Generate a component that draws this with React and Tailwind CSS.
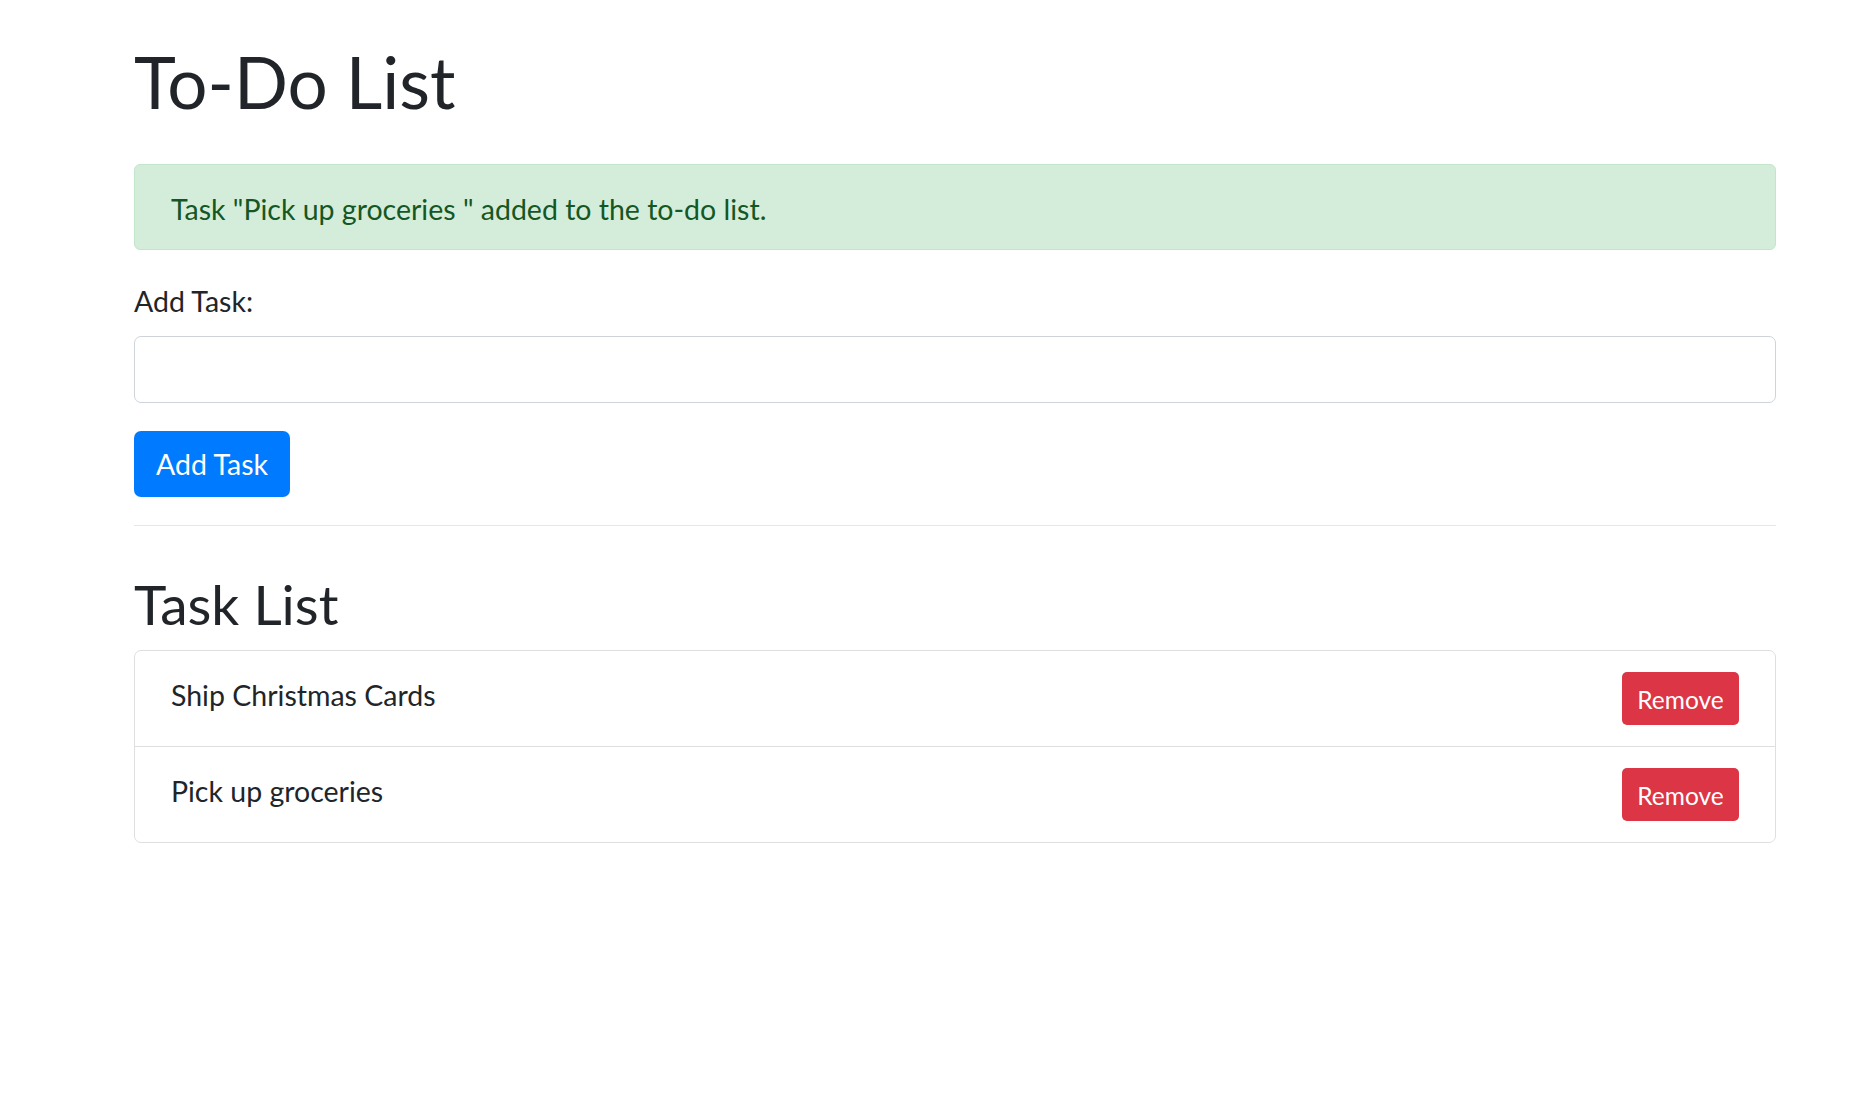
import { useState } from "react";

function App() {
  const [tasks, setTasks] = useState(["Ship Christmas Cards", "Pick up groceries"]);
  const [text, setText] = useState("");
  const [message, setMessage] = useState('Task "Pick up groceries " added to the to-do list.');

  const addTask = (e) => {
    e.preventDefault();
    if (!text.trim()) return;
    setTasks([...tasks, text]);
    setMessage(`Task "${text} " added to the to-do list.`);
    setText("");
  };

  const removeTask = (i) => {
    setTasks(tasks.filter((_, idx) => idx !== i));
  };

  return (
    <div className="min-h-screen bg-white font-['Lato',sans-serif] text-[#212529]">
      <div className="pl-[134px] pr-[100px] pt-[37px]">
        <h1 className="text-[71px] leading-[90px] font-normal">To-Do List</h1>

        {message && (
          <div className="mt-[37px] rounded-[6px] border border-[#c3e6cb] bg-[#d4edda] px-[36px] pt-[23px] pb-[19px] text-[28.5px] leading-[42px] text-[#155724]">
            {message}
          </div>
        )}

        <form onSubmit={addTask} className="mt-[30px]">
          <label htmlFor="task" className="block text-[28.5px] leading-[42px]">
            Add Task:
          </label>
          <input
            id="task"
            value={text}
            onChange={(e) => setText(e.target.value)}
            className="mt-[14px] block h-[67px] w-full rounded-[7px] border border-[#ced4da] px-[21px] text-[28px] outline-none"
          />
          <button
            type="submit"
            className="mt-[28px] h-[66px] w-[156px] rounded-[7px] bg-[#007bff] text-[28.5px] leading-[42px] text-white"
          >
            Add Task
          </button>
        </form>

        <hr className="mt-[28px] border-0 border-t border-[#e6e6e6]" />

        <h2 className="mt-[45px] text-[55px] leading-[67px] font-normal">Task List</h2>

        <ul className="mt-[12px] rounded-[7px] border border-[#dfdfdf]">
          {tasks.map((task, i) => (
            <li
              key={i}
              className="flex items-start justify-between border-[#dfdfdf] px-[36px] py-[21px] text-[28.5px] leading-[42px] [&:not(:first-child)]:border-t"
            >
              <span className="pt-[2px]">{task}</span>
              <button
                onClick={() => removeTask(i)}
                className="h-[53px] w-[117px] rounded-[5px] bg-[#dc3545] pt-[1px] text-[24.5px] leading-[37px] text-white"
              >
                Remove
              </button>
            </li>
          ))}
        </ul>
      </div>
    </div>
  );
}

export default App;
